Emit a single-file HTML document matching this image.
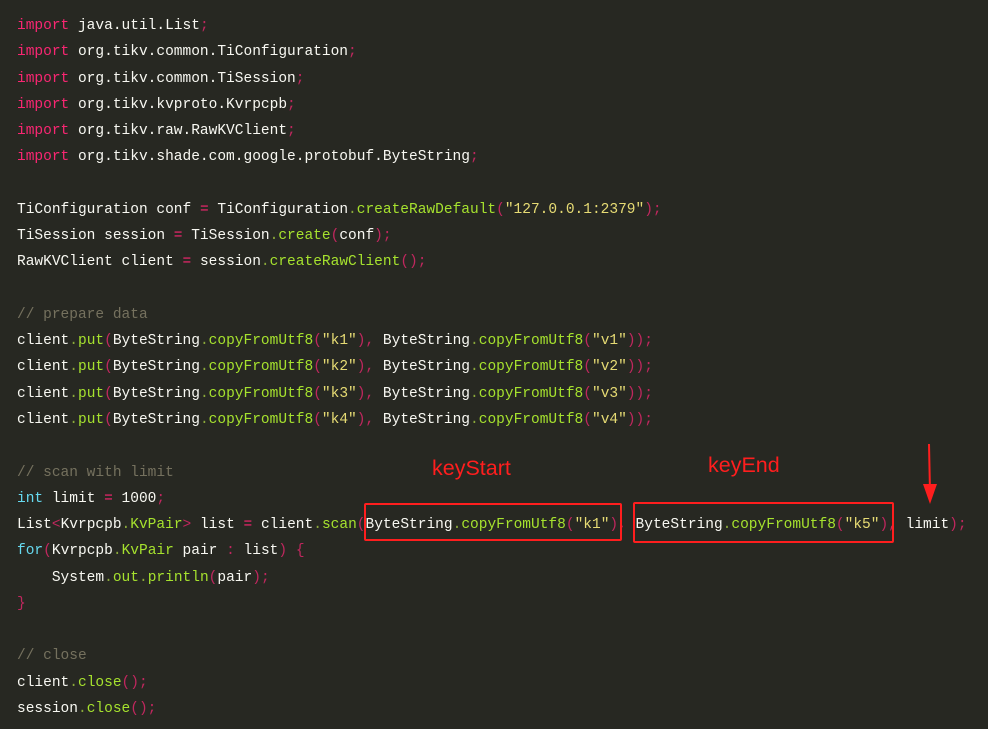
<!DOCTYPE html>
<html><head><meta charset="utf-8"><style>
html,body{margin:0;padding:0;background:#272822;width:988px;height:729px;overflow:hidden;position:relative}
pre{margin:0;padding:13px 0 0 17px;font-family:"Liberation Mono",monospace;font-size:14.53px;line-height:26.27px;color:#f8f8f2}
.k{color:#f92672}.p{color:#c0275e}.f{color:#a6e22e}.s{color:#e6db74}.c{color:#75715e}.t{color:#66d9ef}.d{color:#8aa83a}
.box{position:absolute;border:2px solid #ff1e1e;border-radius:2px}
.lbl{position:absolute;color:#ff1e1e;font-family:"Liberation Sans","Noto Sans CJK SC",sans-serif;font-size:21.5px}
</style></head><body>
<pre><span class="k">import</span> java.util.List<span class="p">;</span>
<span class="k">import</span> org.tikv.common.TiConfiguration<span class="p">;</span>
<span class="k">import</span> org.tikv.common.TiSession<span class="p">;</span>
<span class="k">import</span> org.tikv.kvproto.Kvrpcpb<span class="p">;</span>
<span class="k">import</span> org.tikv.raw.RawKVClient<span class="p">;</span>
<span class="k">import</span> org.tikv.shade.com.google.protobuf.ByteString<span class="p">;</span>

TiConfiguration conf <span class="k">=</span> TiConfiguration<span class="d">.</span><span class="f">createRawDefault</span><span class="p">(</span><span class="s">"127.0.0.1:2379"</span><span class="p">);</span>
TiSession session <span class="k">=</span> TiSession<span class="d">.</span><span class="f">create</span><span class="p">(</span>conf<span class="p">);</span>
RawKVClient client <span class="k">=</span> session<span class="d">.</span><span class="f">createRawClient</span><span class="p">();</span>

<span class="c">// prepare data</span>
client<span class="d">.</span><span class="f">put</span><span class="p">(</span>ByteString<span class="d">.</span><span class="f">copyFromUtf8</span><span class="p">(</span><span class="s">"k1"</span><span class="p">),</span> ByteString<span class="d">.</span><span class="f">copyFromUtf8</span><span class="p">(</span><span class="s">"v1"</span><span class="p">));</span>
client<span class="d">.</span><span class="f">put</span><span class="p">(</span>ByteString<span class="d">.</span><span class="f">copyFromUtf8</span><span class="p">(</span><span class="s">"k2"</span><span class="p">),</span> ByteString<span class="d">.</span><span class="f">copyFromUtf8</span><span class="p">(</span><span class="s">"v2"</span><span class="p">));</span>
client<span class="d">.</span><span class="f">put</span><span class="p">(</span>ByteString<span class="d">.</span><span class="f">copyFromUtf8</span><span class="p">(</span><span class="s">"k3"</span><span class="p">),</span> ByteString<span class="d">.</span><span class="f">copyFromUtf8</span><span class="p">(</span><span class="s">"v3"</span><span class="p">));</span>
client<span class="d">.</span><span class="f">put</span><span class="p">(</span>ByteString<span class="d">.</span><span class="f">copyFromUtf8</span><span class="p">(</span><span class="s">"k4"</span><span class="p">),</span> ByteString<span class="d">.</span><span class="f">copyFromUtf8</span><span class="p">(</span><span class="s">"v4"</span><span class="p">));</span>

<span class="c">// scan with limit</span>
<span class="t">int</span> limit <span class="k">=</span> 1000<span class="p">;</span>
List<span class="p">&lt;</span>Kvrpcpb<span class="d">.</span><span class="f">KvPair</span><span class="p">&gt;</span> list <span class="k">=</span> client<span class="d">.</span><span class="f">scan</span><span class="p">(</span>ByteString<span class="d">.</span><span class="f">copyFromUtf8</span><span class="p">(</span><span class="s">"k1"</span><span class="p">),</span> ByteString<span class="d">.</span><span class="f">copyFromUtf8</span><span class="p">(</span><span class="s">"k5"</span><span class="p">),</span> limit<span class="p">);</span>
<span class="t">for</span><span class="p">(</span>Kvrpcpb<span class="d">.</span><span class="f">KvPair</span> pair <span class="p">:</span> list<span class="p">)</span> <span class="p">{</span>
    System<span class="d">.</span><span class="f">out</span><span class="d">.</span><span class="f">println</span><span class="p">(</span>pair<span class="p">);</span>
<span class="p">}</span>

<span class="c">// close</span>
client<span class="d">.</span><span class="f">close</span><span class="p">();</span>
session<span class="d">.</span><span class="f">close</span><span class="p">();</span></pre>
<div class="box" style="left:364px;top:503px;width:254px;height:34px"></div>
<div class="box" style="left:633px;top:502px;width:257px;height:37px"></div>
<div class="lbl" style="left:432px;top:456px">keyStart</div>
<div class="lbl" style="left:708px;top:453px">keyEnd</div>
<svg style="position:absolute;left:918px;top:440px" width="24" height="70"><line x1="11" y1="4" x2="12" y2="52" stroke="#ff1e1e" stroke-width="2"/><polygon points="5,44 19,44 12,64" fill="#ff1e1e"/></svg>
</body></html>
